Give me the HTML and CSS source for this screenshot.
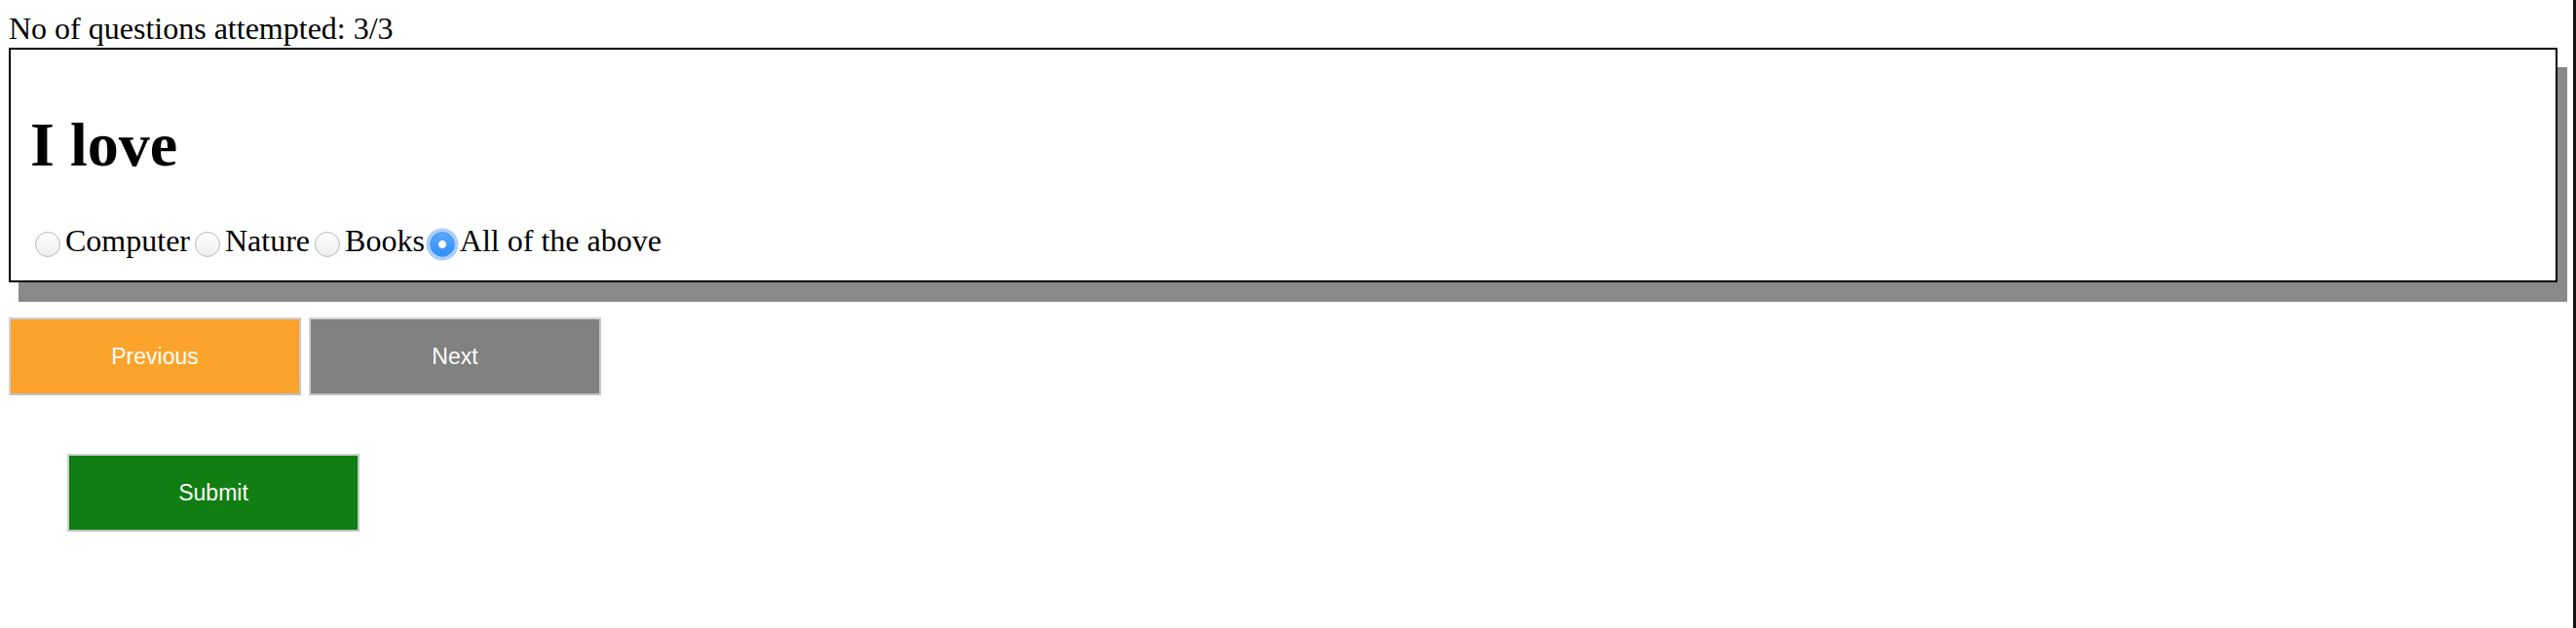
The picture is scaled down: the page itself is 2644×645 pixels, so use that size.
FILE: index.html
```html
<!DOCTYPE html>
<html lang="en">
<head>
<meta charset="utf-8">
<title>Quiz</title>
<link rel="stylesheet" href="styles.css">
</head>
<body>
<div class="status">No of questions attempted: 3/3</div>
<div class="card">
  <h1 class="question">I love</h1>
  <div class="options"><input class="radio" type="radio" name="q" id="o1"><label for="o1">Computer</label><input class="radio" type="radio" name="q" id="o2"><label for="o2">Nature</label><input class="radio" type="radio" name="q" id="o3"><label for="o3">Books</label><input class="radio" type="radio" name="q" id="o4" checked><label for="o4">All of the above</label></div>
</div>
<div class="nav">
  <button class="btn btn-prev">Previous</button>
  <button class="btn btn-next">Next</button>
</div>
<button class="btn btn-submit">Submit</button>
</body>
</html>
```
FILE: styles.css
```css
html {
  min-height: 100%;
  border-right: 3px solid #141414;
  background: #fff;
}

body {
  margin: 0;
  padding: 10px 16px 0 9px;
  font-family: "Liberation Serif", "Times New Roman", serif;
  font-size: 32px;
  color: #000;
}

.status {
  line-height: 39px;
}

.card {
  border: 2px solid #000;
  padding: 20px 20px 22px;
  box-shadow: 10px 20px 0 0 #898989;
  background: #fff;
}

.question {
  font-size: 64px;
  font-weight: bold;
  line-height: 74px;
  margin: 41px 0 43px;
}

.options {
  line-height: 37px;
}

.radio {
  appearance: none;
  -webkit-appearance: none;
  width: 26px;
  height: 26px;
  margin: 0 5px;
  vertical-align: middle;
  border-radius: 50%;
  border: 1px solid #b9b9b9;
  background: linear-gradient(#ffffff, #eeeeee);
  box-sizing: border-box;
}

.radio:checked {
  border-color: #3a8ef2;
  background: radial-gradient(circle, #ffffff 0 3.6px, transparent 4.4px), linear-gradient(#5aa8fd, #2f8ff8);
  box-shadow: 0 0 0 3.5px rgba(100, 165, 250, 0.55);
}

.nav {
  display: flex;
  gap: 8px;
  margin-top: 36px;
}

.btn {
  display: block;
  width: 300px;
  height: 80px;
  box-sizing: border-box;
  border: 2px solid #d2d2d2;
  border-bottom-color: #c0c0c0;
  border-right-color: #c8c8c8;
  font-family: "Liberation Sans", Arial, sans-serif;
  font-size: 23px;
  color: #fff;
  padding: 0;
}

.btn-prev {
  background: #fca32b;
}

.btn-next {
  background: #818181;
}

.btn-submit {
  background: #107e12;
  margin: 60px 0 0 60px;
}
```
